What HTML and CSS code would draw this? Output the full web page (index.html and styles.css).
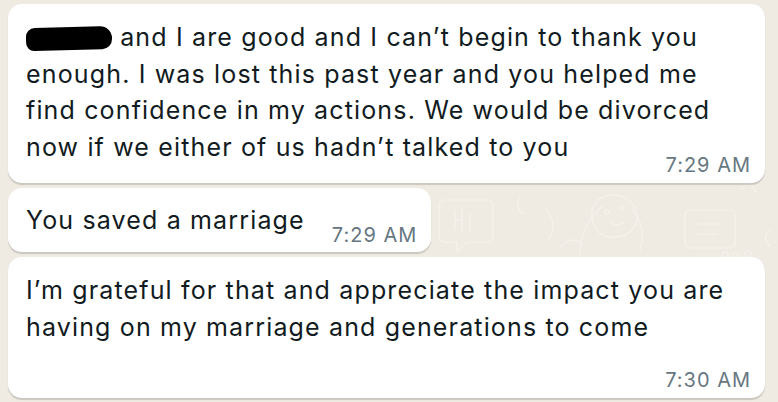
FILE: index.html
```html
<!DOCTYPE html>
<html>
<head>
<meta charset="utf-8">
<link rel="stylesheet" href="styles.css">
</head>
<body>
<div class="chat">
  <svg class="doodles" viewBox="0 0 778 402" preserveAspectRatio="none" aria-hidden="true">
    <g fill="none" stroke="#f4f1ec" stroke-width="1.6" stroke-linecap="round" stroke-linejoin="round">
      <path d="M445 200 h42 a6 6 0 0 1 6 6 v30 a6 6 0 0 1 -6 6 h-20 l-10 10 v-10 h-12 a6 6 0 0 1 -6 -6 v-30 a6 6 0 0 1 6 -6z"/>
      <path d="M455 210 v20 M462 210 v20 M455 220 h7 M470 214 v16"/>
      <path d="M580 255 c0-20 10-40 22-48 M640 250 c5-15 2-30-8-40"/>
      <path d="M612 195 c-14 0-22 12-20 24 c2 14 14 20 26 18 c14-2 22-14 18-26 c-3-10-12-16-24-16z"/>
      <circle cx="607" cy="212" r="2"/><circle cx="622" cy="208" r="2"/>
      <path d="M610 222 c4 4 10 4 14 0"/>
      <path d="M690 210 h40 a5 5 0 0 1 5 5 v28 a5 5 0 0 1 -5 5 h-40 a5 5 0 0 1 -5 -5 v-28 a5 5 0 0 1 5 -5z"/>
      <path d="M697 224 h26 M697 234 h20"/>
      <path d="M740 190 l10 -8 l6 10 M548 240 c8-10 6-22-2-30 M560 248 c6-8 14-10 20-6"/>
      <circle cx="725" cy="255" r="3"/><circle cx="735" cy="256" r="3"/><circle cx="748" cy="254" r="3"/>
      <path d="M520 198 c-4 6-2 14 4 16 M770 230 c-6 4-6 12 0 16"/>
    </g>
  </svg>
  <div class="bubble wide">
    <p class="text"><span class="redact"></span> and I are good and I can’t begin to thank you enough. I was lost this past year and you helped me find confidence in my actions. We would be divorced now if we either of us hadn’t talked to you</p>
    <div class="meta tucked">7:29 AM</div>
  </div>
  <div class="bubble short">
    <p class="text">You saved a marriage</p>
    <div class="meta inline">7:29 AM</div>
  </div>
  <div class="bubble wide">
    <p class="text">I’m grateful for that and appreciate the impact you are having on my marriage and generations to come</p>
    <div class="meta below">7:30 AM</div>
  </div>
</div>
</body>
</html>
```

FILE: styles.css
```css
* { box-sizing: border-box; }
html, body {
  margin: 0;
  padding: 0;
  width: 778px;
  height: 402px;
  overflow: hidden;
  background: #efeae2;
}
.chat {
  position: relative;
  display: flex;
  flex-direction: column;
  align-items: flex-start;
  gap: 5px;
  padding: 4px 13px 0 8px;
  height: 402px;
  font-family: Inter, "Liberation Sans", Arial, sans-serif;
}
.doodles {
  position: absolute;
  left: 0;
  top: 0;
  width: 778px;
  height: 402px;
}
.bubble {
  position: relative;
  background: #ffffff;
  border-radius: 14px;
  box-shadow: 0 1.5px 1px rgba(11, 20, 26, 0.16);
  padding: 15px 14px 6px 18px;
}
.wide { width: 100%; }
.short {
  display: flex;
  align-items: flex-start;
  padding-top: 14px;
  padding-bottom: 5px;
}
.text {
  margin: 0;
  font-size: 25px;
  line-height: 36.5px;
  letter-spacing: 1.15px;
  color: #111b21;
}
.meta {
  font-size: 20px;
  line-height: 24px;
  letter-spacing: 1px;
  color: #667781;
  text-align: right;
  white-space: nowrap;
}
.tucked { margin-top: -12px; }
.inline { margin-top: 21px; margin-left: 27px; }
.below { margin-top: 23px; }
.redact {
  display: inline-block;
  width: 86px;
  height: 23px;
  background: #000;
  border-radius: 9px 12px 10px 8px;
  vertical-align: -4px;
  transform: rotate(-1.5deg);
}
```
